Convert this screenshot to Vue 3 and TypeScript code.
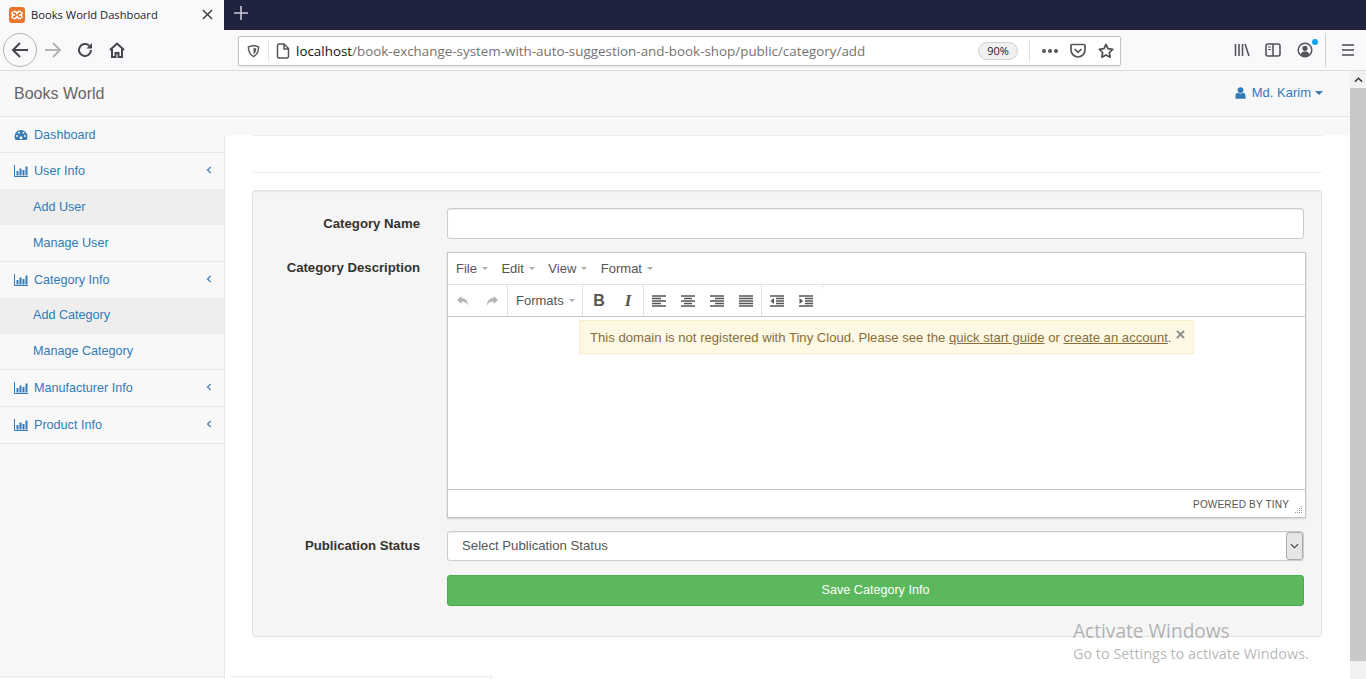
<template>
  <div class="screen">
    <div class="tabstrip">
      <div class="tab">
        <svg class="favicon" viewBox="0 0 16 16"><rect width="16" height="16" rx="3" fill="#e8762d"/><path d="M4 4.5h2.500L8 6.500l1.500-2H12M4 11.500h2.500L8 9.500l1.500 2H12M6 8H4.500a1.800 1.800 0 0 1-1-3M10 8h1.500a1.800 1.800 0 0 0 1-3M6 8H4.500a1.800 1.800 0 0 0-1 3M10 8h1.500a1.800 1.800 0 0 1 1 3" fill="none" stroke="#fff" stroke-width="1.600"/></svg>
        <span class="tab-title">Books World Dashboard</span>
        <svg class="tab-close" viewBox="0 0 12 12"><path d="M1 1l10 10M11 1L1 11" stroke="#3a3a3c" stroke-width="1.500"/></svg>
      </div>
      <svg class="newtab" viewBox="0 0 14 14"><path d="M7 0v14M0 7h14" stroke="#c9cad6" stroke-width="1.600"/></svg>
    </div>

    <div class="toolbar">
      <div class="nav-btns">
        <div class="back">
          <svg viewBox="0 0 18 18" width="18" height="18"><path d="M17 9H2M9 2L2 9l7 7" fill="none" stroke="#45454a" stroke-width="2"/></svg>
        </div>
        <svg class="fwd" viewBox="0 0 18 18" width="18" height="18"><path d="M1 9h15M9 2l7 7-7 7" fill="none" stroke="#b4b4b6" stroke-width="2"/></svg>
        <svg class="reload" viewBox="0 0 16 16" width="16" height="16"><path d="M14 8a6 6 0 1 1-1.800-4.300" fill="none" stroke="#45454a" stroke-width="2"/><path d="M15 1v5.500H9.500z" fill="#45454a"/></svg>
        <svg class="home" viewBox="0 0 16 16" width="16" height="16"><path d="M1 8l7-6.500L15 8M3 7v8h3.500v-4h3v4H13V7" fill="none" stroke="#45454a" stroke-width="2"/></svg>
      </div>
      <div class="urlbar">
        <svg class="shield" viewBox="0 0 14 14" width="13" height="14"><path d="M7 1l5.500 1.500c0 5-1.500 8.500-5.500 10.500C3 11 1.500 7.500 1.500 2.500z" fill="none" stroke="#5b5b60" stroke-width="1.600"/><path d="M7 3.500l3 .8c0 3-.8 4.700-3 6.200z" fill="#5b5b60"/></svg>
        <span class="url-sep"></span>
        <svg class="page-ic" viewBox="0 0 14 16" width="14" height="16"><path d="M1.500 2.500a1.500 1.500 0 0 1 1.500-1.500h5l4.500 4.500v8a1.500 1.500 0 0 1-1.500 1.500H3a1.500 1.500 0 0 1-1.500-1.500zM8 1v5h4.500" fill="none" stroke="#55555a" stroke-width="1.500"/></svg>
        <span class="url"><span class="host">localhost</span>/book-exchange-system-with-auto-suggestion-and-book-shop/public/category/add</span>
        <span class="zoom-pill">90%</span>
        <span class="url-sep tall"></span>
        <span class="dots"><i></i><i></i><i></i></span>
        <svg class="pocket" viewBox="0 0 16 16" width="16" height="16"><path d="M1 2.500a1 1 0 0 1 1-1h12a1 1 0 0 1 1 1V7a7 7 0 0 1-14 0z" fill="none" stroke="#55555a" stroke-width="1.700"/><path d="M4.500 6L8 9.300 11.500 6" fill="none" stroke="#55555a" stroke-width="1.700"/></svg>
        <svg class="star" viewBox="0 0 16 16" width="16" height="16"><path d="M8 1.400l2 4.300 4.700.6-3.400 3.200.9 4.700L8 11.900l-4.200 2.300.9-4.700L1.300 6.300 6 5.700z" fill="none" stroke="#4f4f54" stroke-width="1.700" stroke-linejoin="round"/></svg>
      </div>
      <div class="tools">
        <svg viewBox="0 0 16 16" width="16" height="16"><path d="M1.500 2v12M5 2v12M8.500 2v12M11 2l4 12" stroke="#55555a" stroke-width="1.600" fill="none"/></svg>
        <svg viewBox="0 0 16 16" width="16" height="16"><rect x="1" y="2" width="14" height="12" rx="2" fill="none" stroke="#55555a" stroke-width="1.600"/><path d="M8 2v12" stroke="#55555a" stroke-width="1.600"/><path d="M3 5h3M3 7.500h3" stroke="#55555a"/></svg>
        <div class="account">
          <svg viewBox="0 0 16 16" width="16" height="16"><circle cx="8" cy="8" r="6.800" fill="none" stroke="#55555a" stroke-width="1.500"/><circle cx="8" cy="6.300" r="2.600" fill="#55555a"/><path d="M3.500 12.500c1-2.500 2.500-3 4.500-3s3.500.5 4.500 3a6 6 0 0 1-9 0z" fill="#55555a"/></svg>
          <span class="dot"></span>
        </div>
        <span class="tool-sep"></span>
        <svg class="burger" viewBox="0 0 14 14" width="14" height="14"><path d="M1 2h12M1 7h12M1 12h12" stroke="#4a4a4f" stroke-width="1.600"/></svg>
      </div>
    </div>

    <div class="viewport">
      <div class="page">
        <header class="navbar">
          <span class="brand">Books World</span>
          <span class="user">
            <svg class="user-ic" viewBox="0 0 12 13" width="11" height="12"><circle cx="6" cy="3.300" r="3.200" fill="#337ab7"/><path d="M0.500 12.800V9.500C.5 7.500 2 6.500 3 6.300c1.800 1.200 4.200 1.200 6 0 1 .2 2.500 1.200 2.500 3.200v3.300z" fill="#337ab7"/></svg>
            Md. Karim
            <span class="caret"></span>
          </span>
        </header>
        <div class="body">
          <aside class="sidebar">
            <div v-for="item in menu" :key="item.label" class="group">
              <div class="menu-row">
                <svg v-if="item.icon === 'gauge'" class="ic" viewBox="0 0 14 12" width="14" height="12"><path d="M7 1a6.500 6.500 0 0 0-6.500 6.500c0 1.300.4 2.600 1.100 3.600h10.800c.7-1 1.100-2.300 1.100-3.600A6.500 6.500 0 0 0 7 1z" fill="#337ab7"/><circle cx="3" cy="7" r="1" fill="#f8f8f8"/><circle cx="5" cy="3.800" r="1" fill="#f8f8f8"/><circle cx="9.500" cy="3.800" r="1" fill="#f8f8f8"/><circle cx="11" cy="7" r="1" fill="#f8f8f8"/><circle cx="7" cy="8.800" r="1.500" fill="#f8f8f8"/></svg>
                <svg v-else class="ic" viewBox="0 0 14 12" width="14" height="12"><path d="M.5 0v11.500H14" fill="none" stroke="#337ab7"/><path d="M2.500 6h2v4.500h-2zM5.500 3.500h2v7h-2zM8.500 5h2v5.500h-2zM11.500 1.500h2v9h-2z" fill="#337ab7"/></svg>
                <span class="label">{{ item.label }}</span>
                <svg v-if="item.arrow" class="chev" viewBox="0 0 6 8" width="6" height="8"><path d="M4.800 1L1.500 4l3.300 3" fill="none" stroke="#4f86b8" stroke-width="1.300"/></svg>
              </div>
              <div v-for="(sub, i) in item.children" :key="sub" class="sub-row" :class="{ shaded: i === 0 }">{{ sub }}</div>
            </div>
            <div class="sidebar-foot"></div>
          </aside>
          <main class="content">
            <div class="rule first"></div>
            <div class="rule second"></div>
            <form class="well" @submit.prevent>
              <div class="field">
                <label class="field-label">Category Name</label>
                <div class="control"><div class="input"></div></div>
              </div>
              <div class="field">
                <label class="field-label">Category Description</label>
                <div class="control">
                  <div class="editor">
                    <div class="menubar">
                      <span v-for="m in editorMenu" :key="m" class="menu-item">{{ m }}<i class="mini-caret"></i></span>
                    </div>
                    <div class="editbar">
                      <div class="btn-group">
                        <svg class="tb" viewBox="0 0 16 16" width="16" height="16"><path d="M6.500 3L2 7l4.500 4V8.500c3 0 5 .8 6.500 4 0-4.500-2-7-6.500-7.500z" fill="#b4b4b4"/></svg>
                        <svg class="tb" viewBox="0 0 16 16" width="16" height="16"><path d="M9.500 3L14 7l-4.500 4V8.500c-3 0-5 .8-6.500 4 0-4.500 2-7 6.500-7.500z" fill="#b4b4b4"/></svg>
                      </div>
                      <div class="btn-group formats"><span class="menu-item">Formats<i class="mini-caret"></i></span></div>
                      <div class="btn-group style-group">
                        <span class="tb glyph bold">B</span>
                        <span class="tb glyph italic">I</span>
                      </div>
                      <div class="btn-group">
                        <svg v-for="a in aligns" :key="a" class="tb" viewBox="0 0 16 16" width="16" height="16"><path :d="a" stroke="#555" stroke-width="1.700" fill="none"/></svg>
                      </div>
                      <div class="btn-group last">
                        <svg class="tb" viewBox="0 0 16 16" width="16" height="16"><path d="M1 3h14M7 5.500h8M7 8h8M7 10.500h8M1 13h14" stroke="#555" stroke-width="1.500" fill="none"/><path d="M5 5v6L1.500 8z" fill="#555"/></svg>
                        <svg class="tb" viewBox="0 0 16 16" width="16" height="16"><path d="M1 3h14M7 5.500h8M7 8h8M7 10.500h8M1 13h14" stroke="#555" stroke-width="1.500" fill="none"/><path d="M1.500 5v6L5 8z" fill="#555"/></svg>
                      </div>
                      <span class="tick"></span>
                    </div>
                    <div class="edit-area">
                      <div class="notice">
                        <span>This domain is not registered with Tiny Cloud. Please see the <u>quick start guide</u> or <u>create an account</u>.</span>
                        <svg class="notice-x" viewBox="0 0 10 10" width="9" height="9"><path d="M1 1l8 8M9 1L1 9" stroke="#8a8a8a" stroke-width="2.200"/></svg>
                      </div>
                    </div>
                    <div class="statusbar">
                      <span>POWERED BY TINY</span>
                      <svg class="grip" viewBox="0 0 8 8" width="8" height="8"><path d="M7 0h1v1H7zM5 2h1v1H5zM7 2h1v1H7zM3 4h1v1H3zM5 4h1v1H5zM7 4h1v1H7zM1 6h1v1H1zM3 6h1v1H3zM5 6h1v1H5zM7 6h1v1H7z" fill="#999"/></svg>
                    </div>
                  </div>
                </div>
              </div>
              <div class="field status-field">
                <label class="field-label">Publication Status</label>
                <div class="control">
                  <div class="select">
                    <span class="select-text">Select Publication Status</span>
                    <span class="select-arrow"><svg viewBox="0 0 10 6" width="9" height="6"><path d="M1 1l4 4 4-4" fill="none" stroke="#333" stroke-width="1.200"/></svg></span>
                  </div>
                </div>
              </div>
              <div class="field">
                <span class="field-label"></span>
                <div class="control"><button class="save" type="button">Save Category Info</button></div>
              </div>
            </form>
            <div class="bottom-rule"></div>
          </main>
        </div>
      </div>
      <div class="scrollbar">
        <div class="scroll-up"><svg viewBox="0 0 10 6" width="9" height="6"><path d="M1 5l4-4 4 4" fill="none" stroke="#333" stroke-width="1.600"/></svg></div>
        <div class="scroll-thumb"></div>
      </div>
      <div class="activate">
        <div class="act-title">Activate Windows</div>
        <div class="act-sub">Go to Settings to activate Windows.</div>
      </div>
    </div>
  </div>
</template>

<script setup lang="ts">
interface MenuItem {
  label: string
  icon: 'gauge' | 'bars'
  arrow: boolean
  children: string[]
}

const menu: MenuItem[] = [
  { label: 'Dashboard', icon: 'gauge', arrow: false, children: [] },
  { label: 'User Info', icon: 'bars', arrow: true, children: ['Add User', 'Manage User'] },
  { label: 'Category Info', icon: 'bars', arrow: true, children: ['Add Category', 'Manage Category'] },
  { label: 'Manufacturer Info', icon: 'bars', arrow: true, children: [] },
  { label: 'Product Info', icon: 'bars', arrow: true, children: [] },
]

const editorMenu = ['File', 'Edit', 'View', 'Format']

const aligns = [
  'M1 3h14M1 5.500h9M1 8h14M1 10.500h9M1 13h14',
  'M1 3h14M4 5.500h8M1 8h14M4 10.500h8M1 13h14',
  'M1 3h14M6 5.500h9M1 8h14M6 10.500h9M1 13h14',
  'M1 3h14M1 5.500h14M1 8h14M1 10.500h14M1 13h14',
]
</script>

<style>
html, body { margin: 0; padding: 0; overflow: hidden; }
</style>

<style scoped>
.screen {
  width: 1366px;
  height: 679px;
  overflow: hidden;
  display: flex;
  flex-direction: column;
  font-family: "Liberation Sans", Arial, sans-serif;
  font-size: 13px;
  color: #333;
}

.tabstrip {
  height: 30px;
  flex: none;
  background: #20233f;
  display: flex;
  align-items: center;
}
.tab {
  width: 224px;
  height: 30px;
  background: #f9f9fb;
  display: flex;
  align-items: center;
  padding: 0 10px 0 9px;
  box-sizing: border-box;
}
.favicon { width: 16px; height: 16px; flex: none; margin-top: -1px; }
.tab-title {
  font-family: "Open Sans", sans-serif;
  font-size: 11.200px;
  margin-left: 6px;
  margin-top: -1px;
  flex: 1;
  color: #222;
  white-space: nowrap;
}
.tab-close { width: 11px; height: 11px; margin-right: 1px; margin-top: -1px; }
.newtab { width: 14px; height: 14px; margin-left: 10px; margin-top: -5px; }

.toolbar {
  height: 41px;
  flex: none;
  box-sizing: border-box;
  background: #f9f9fb;
  border-bottom: 1px solid #dcdcde;
  display: flex;
  align-items: center;
}
.nav-btns {
  width: 238px;
  flex: none;
  display: flex;
  align-items: center;
  padding-left: 3px;
  box-sizing: border-box;
}
.back {
  width: 32px;
  height: 32px;
  border: 1px solid #b3b3b5;
  border-radius: 50%;
  display: flex;
  align-items: center;
  justify-content: center;
  flex: none;
}
.fwd { margin-left: 7px; }
.reload { margin-left: 15px; }
.home { margin-left: 16px; }
.urlbar {
  width: 883px;
  height: 30px;
  flex: none;
  box-sizing: border-box;
  background: #fff;
  border: 1px solid #c4c4c6;
  border-radius: 2px;
  display: flex;
  align-items: center;
  box-shadow: 0 1px 2px rgba(0, 0, 0, 0.08);
  margin-top: 1px;
}
.shield { margin-left: 8px; }
.url-sep { width: 1px; height: 20px; background: #e3e3e5; margin-left: 8px; }
.url-sep.tall { height: 22px; margin-left: 11px; }
.page-ic { margin-left: 7px; }
.url {
  font-family: "Open Sans", sans-serif;
  font-size: 13.400px;
  color: #737373;
  margin-left: 6px;
  flex: 1;
  white-space: nowrap;
}
.host { color: #111; }
.zoom-pill {
  width: 40px;
  height: 18px;
  box-sizing: border-box;
  border: 1px solid #d2d2d2;
  background: #f0f0f2;
  border-radius: 9px;
  font-family: "Open Sans", sans-serif;
  font-size: 11px;
  line-height: 16px;
  text-align: center;
  color: #222;
}
.dots { display: flex; gap: 2px; margin-left: 12px; }
.dots i { width: 4px; height: 4px; border-radius: 50%; background: #55555a; }
.pocket { margin-left: 12px; }
.star { margin-left: 12px; margin-right: 6px; }
.tools {
  display: flex;
  align-items: center;
  padding-left: 113px;
  height: 100%;
}
.tools > svg:nth-child(2) { margin-left: 15px; }
.account { position: relative; margin-left: 16px; height: 16px; }
.dot {
  position: absolute;
  right: -5px;
  top: -3px;
  width: 6px;
  height: 6px;
  background: #12a5ee;
  border-radius: 50%;
}
.tool-sep { width: 1px; height: 34px; background: #d0d0d2; margin-left: 12px; }
.burger { margin-left: 15px; }

.viewport {
  flex: 1;
  display: flex;
  position: relative;
  min-height: 0;
}
.page {
  flex: 1;
  min-width: 0;
  background: #f8f8f8;
  display: flex;
  flex-direction: column;
}
.navbar {
  height: 46px;
  flex: none;
  box-sizing: border-box;
  border-bottom: 1px solid #e7e7e7;
  display: flex;
  align-items: center;
  justify-content: space-between;
  padding: 0 27px 0 14px;
}
.brand { font-size: 16px; color: #666; }
.user { font-size: 13px; color: #337ab7; display: flex; align-items: center; gap: 5px; margin-top: -2px; }
.user-ic { margin-right: 1px; }
.caret {
  width: 0;
  height: 0;
  border-left: 4px solid transparent;
  border-right: 4px solid transparent;
  border-top: 4px solid #337ab7;
  margin-left: -1px;
}
.body { flex: 1; display: flex; min-height: 0; }
.sidebar { width: 224px; flex: none; display: flex; flex-direction: column; }
.group { border-bottom: 1px solid #e7e7e7; }
.group:first-child .menu-row { height: 35px; }
.group:nth-child(3) .sub-row { height: 35.500px; line-height: 35.500px; }
.menu-row {
  height: 36px;
  display: flex;
  align-items: center;
  padding: 0 12px 0 14px;
  color: #337ab7;
  font-size: 12.600px;
}
.ic { flex: none; }
.label { margin-left: 6px; flex: 1; }
.chev { margin-bottom: 3px; }
.sub-row {
  height: 36px;
  line-height: 36px;
  padding-left: 33px;
  color: #337ab7;
  font-size: 12.600px;
}
.sub-row.shaded { background: #eee; }
.sidebar-foot {
  margin-top: auto;
  height: 3px;
  border-top: 1px solid #eaeaea;
  box-sizing: border-box;
}
.content {
  flex: 1;
  min-width: 0;
  margin-top: 18px;
  background: #fff;
  border-left: 1px solid #e7e7e7;
  padding: 0 28px 0 27px;
}
.rule { border-top: 1px solid #eee; }
.rule.first { height: 36px; }
.rule.second { height: 17px; }
.well {
  height: 447px;
  box-sizing: border-box;
  background: #f5f5f5;
  border: 1px solid #e3e3e3;
  border-radius: 3px;
  box-shadow: inset 0 1px 1px rgba(0, 0, 0, 0.05);
  padding: 17px 17px 0 0;
}
.bottom-rule {
  margin: 39px 0 0 -22px;
  width: 262px;
  height: 3px;
  box-sizing: border-box;
  border-top: 1px solid #eaeaea;
  border-right: 1px solid #eaeaea;
}
.field { display: flex; margin-bottom: 13px; }
.field-label {
  width: 167px;
  flex: none;
  text-align: right;
  font-weight: 700;
  font-size: 13.200px;
  color: #333;
  padding-top: 8px;
  margin-right: 27px;
}
.control { flex: 1; min-width: 0; }
.input {
  height: 31px;
  box-sizing: border-box;
  background: #fff;
  border: 1px solid #ccc;
  border-radius: 3px;
  box-shadow: inset 0 1px 1px rgba(0, 0, 0, 0.075);
}
.editor {
  width: 859px;
  height: 266px;
  box-sizing: border-box;
  background: #fff;
  border: 1px solid #c5c5c5;
  display: flex;
  flex-direction: column;
  box-shadow: 0 1px 2px rgba(0, 0, 0, 0.15);
}
.menubar {
  height: 32px;
  flex: none;
  display: flex;
  align-items: center;
  padding-left: 8px;
  gap: 13.500px;
  border-bottom: 1px solid #e2e2e2;
  box-sizing: border-box;
}
.menu-item { font-size: 13px; color: #555; display: flex; align-items: center; }
.mini-caret {
  width: 0;
  height: 0;
  border-left: 3px solid transparent;
  border-right: 3px solid transparent;
  border-top: 3px solid #aaa;
  margin-left: 5px;
}
.editbar {
  height: 32px;
  flex: none;
  display: flex;
  box-sizing: border-box;
  border-bottom: 1px solid #c5c5c5;
}
.btn-group {
  display: flex;
  align-items: center;
  gap: 13px;
  padding: 0 7px;
  border-right: 1px solid #e2e2e2;
}
.btn-group.formats { width: 75px; box-sizing: border-box; padding-left: 8px; }
.btn-group.style-group { padding-left: 8px; }
.btn-group.last { border-right: none; padding-right: 8px; }
.tick { width: 1px; height: 4px; background: #e2e2e2; }
.tb { flex: none; }
.glyph {
  width: 16px;
  text-align: center;
  font-family: "Liberation Serif", serif;
  font-size: 17px;
  color: #555;
}
.bold { font-family: "Liberation Sans", sans-serif; font-weight: 700; font-size: 16px; }
.italic { font-weight: 700; font-style: italic; }
.edit-area {
  flex: 1;
  min-height: 0;
  display: flex;
  justify-content: center;
  align-items: flex-start;
  padding-top: 3px;
  padding-right: 4px;
  box-sizing: border-box;
}
.notice {
  width: 615px;
  height: 34px;
  flex: none;
  box-sizing: border-box;
  background: #fcf8e3;
  border: 1px solid #faebcc;
  color: #8a6d3b;
  font-size: 13.130px;
  display: flex;
  align-items: center;
  padding: 0 8px 0 10px;
  white-space: nowrap;
  margin-left: 24px;
}
.notice span { flex: 1; }
.notice-x { margin-bottom: 5px; }
.statusbar {
  height: 28px;
  flex: none;
  box-sizing: border-box;
  border-top: 1px solid #c5c5c5;
  display: flex;
  align-items: center;
  justify-content: flex-end;
  font-size: 10px;
  color: #555;
  padding-right: 3px;
  gap: 5px;
}
.statusbar span { margin-top: 1px; letter-spacing: 0.2px; }
.grip { margin-top: 12px; }
.status-field { margin-bottom: 14px; }
.status-field .field-label { padding-top: 7px; }
.select {
  height: 30px;
  box-sizing: border-box;
  background: #fff;
  border: 1px solid #ccc;
  border-radius: 3px;
  display: flex;
  align-items: center;
  justify-content: space-between;
  padding-left: 14px;
  font-size: 13.200px;
  color: #555;
  box-shadow: inset 0 1px 1px rgba(0, 0, 0, 0.075);
}
.select-text { margin-top: -1px; }
.select-arrow {
  width: 17px;
  height: 28px;
  box-sizing: border-box;
  background: #e6e6e6;
  border: 1px solid #aaa;
  border-radius: 3px;
  display: flex;
  align-items: center;
  justify-content: center;
}
.save {
  display: block;
  width: 100%;
  height: 31px;
  border: 1px solid #4cae4c;
  border-radius: 3px;
  background: #5cb85c;
  color: #fff;
  font-family: inherit;
  font-size: 12.600px;
  padding: 0 0 2px;
}
.scrollbar {
  width: 16px;
  flex: none;
  background: #f1f1f1;
  display: flex;
  flex-direction: column;
}
.scroll-up { height: 17px; display: flex; align-items: center; justify-content: center; }
.scroll-thumb { height: 573px; background: #c8c8c8; }
.activate {
  position: absolute;
  left: 1073px;
  top: 548px;
  color: rgba(120, 120, 120, 0.55);
  font-family: "Open Sans", sans-serif;
  pointer-events: none;
}
.act-title { font-size: 19.100px; line-height: 24px; }
.act-sub { font-size: 14.400px; line-height: 22px; }
</style>
